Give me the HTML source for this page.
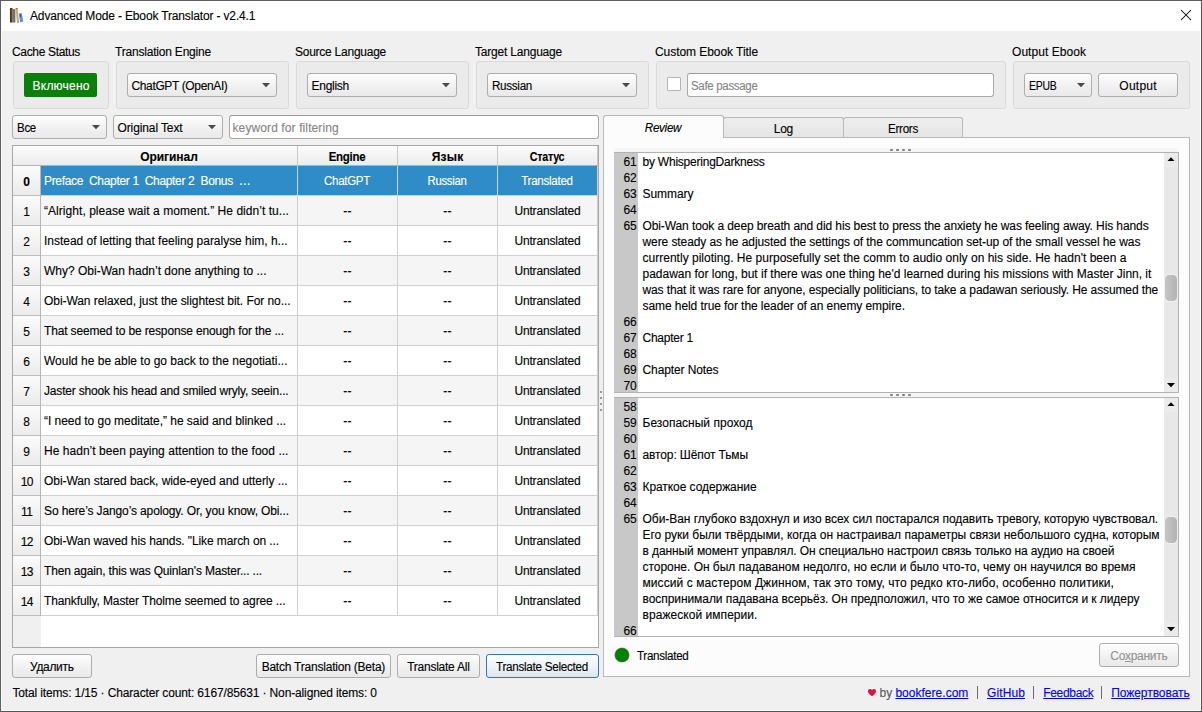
<!DOCTYPE html>
<html><head><meta charset="utf-8"><title>Advanced Mode - Ebook Translator</title>
<style>
html,body{margin:0;padding:0;background:#f0f0f0}
body{width:1202px;height:712px;position:relative;overflow:hidden;font-family:"Liberation Sans", sans-serif;font-size:12px}
div,svg,span.t{position:absolute}
span.t{-webkit-text-stroke:0.12px;white-space:pre;line-height:16px;height:16px}
u{text-decoration:underline}
</style></head>
<body>
<div style="left:0px;top:0px;width:1202px;height:712px;background:#f0f0f0"></div>
<div style="left:1px;top:1px;width:1199px;height:30px;background:#fff"></div>
<svg style="left:8.2px;top:6.8px" width="17.5" height="17" viewBox="0 0 16 16">
<rect x="1.6" y="1" width="2.5" height="13.6" rx="0.6" fill="#5a2a0c"/>
<rect x="2.5" y="2.6" width="0.7" height="10.5" fill="#8a531f"/>
<rect x="4.1" y="2" width="2.6" height="12.6" fill="#5f7a80"/>
<path d="M6.9 1.2 L8.7 0.9 L10.2 14.4 L8.2 14.7 Z" fill="#d9a944"/>
<path d="M6.9 1.2 L8.7 0.9 L8.8 1.8 L7 2.1 Z" fill="#9c5a5a"/>
<path d="M8.2 14.7 L10.2 14.4 L10.15 13.7 L8.1 14 Z" fill="#9c5a5a"/>
<path d="M9.9 6.2 L12.6 5.6 L14.1 13.6 L11.2 14.5 Z" fill="#5b8cff"/>
<path d="M11 7 L11.8 6.8 L12.2 9.6 L11.4 9.8 Z" fill="#2a34d8"/>
</svg>
<svg style="left:1180px;top:9px" width="12" height="12" viewBox="0 0 12 12"><path d="M1 1 L11 11 M11 1 L1 11" stroke="#000" stroke-width="1.05" fill="none"/></svg>
<div style="left:13px;top:61px;width:96px;height:48px;background:#ebebeb;border:1px solid #dadada;border-radius:3px;box-sizing:border-box"></div>
<div style="left:116px;top:61px;width:173px;height:48px;background:#ebebeb;border:1px solid #dadada;border-radius:3px;box-sizing:border-box"></div>
<div style="left:296px;top:61px;width:173px;height:48px;background:#ebebeb;border:1px solid #dadada;border-radius:3px;box-sizing:border-box"></div>
<div style="left:476px;top:61px;width:173px;height:48px;background:#ebebeb;border:1px solid #dadada;border-radius:3px;box-sizing:border-box"></div>
<div style="left:656px;top:61px;width:350px;height:48px;background:#ebebeb;border:1px solid #dadada;border-radius:3px;box-sizing:border-box"></div>
<div style="left:1013px;top:61px;width:177px;height:48px;background:#ebebeb;border:1px solid #dadada;border-radius:3px;box-sizing:border-box"></div>
<div style="left:24px;top:73px;width:73px;height:24px;background:#0a800a;border-radius:2px"></div>
<div style="left:127px;top:73px;width:150px;height:24px;background:linear-gradient(#fefefe,#f0f0f0 60%,#e9e9e9);border:1px solid #adadad;border-radius:3px;box-sizing:border-box"><svg style="right:6.3px;top:9.3px" width="8" height="4.5" viewBox="0 0 8 4.5"><path d="M0 0 L8 0 L4 4.3 Z" fill="#4a4a4a"/></svg></div>
<div style="left:307px;top:73px;width:150px;height:24px;background:linear-gradient(#fefefe,#f0f0f0 60%,#e9e9e9);border:1px solid #adadad;border-radius:3px;box-sizing:border-box"><svg style="right:6.3px;top:9.3px" width="8" height="4.5" viewBox="0 0 8 4.5"><path d="M0 0 L8 0 L4 4.3 Z" fill="#4a4a4a"/></svg></div>
<div style="left:487px;top:73px;width:150px;height:24px;background:linear-gradient(#fefefe,#f0f0f0 60%,#e9e9e9);border:1px solid #adadad;border-radius:3px;box-sizing:border-box"><svg style="right:6.3px;top:9.3px" width="8" height="4.5" viewBox="0 0 8 4.5"><path d="M0 0 L8 0 L4 4.3 Z" fill="#4a4a4a"/></svg></div>
<div style="left:667px;top:77px;width:14px;height:14px;background:#fff;border:1px solid #b4b4b4;box-sizing:border-box;border-radius:1px"></div>
<div style="left:687px;top:73px;width:307px;height:24px;background:#fff;border:1px solid #a9a9a9;border-top-color:#9a9a9a;border-radius:3px;box-sizing:border-box"></div>
<div style="left:1024px;top:73px;width:68px;height:24px;background:linear-gradient(#fefefe,#f0f0f0 60%,#e9e9e9);border:1px solid #adadad;border-radius:3px;box-sizing:border-box"><svg style="right:6.3px;top:9.3px" width="8" height="4.5" viewBox="0 0 8 4.5"><path d="M0 0 L8 0 L4 4.3 Z" fill="#4a4a4a"/></svg></div>
<div style="left:1098px;top:73px;width:80px;height:24px;background:linear-gradient(#fefefe,#f0f0f0 60%,#e9e9e9);border:1px solid #adadad;border-radius:3px;box-sizing:border-box;"></div>
<div style="left:12px;top:115px;width:95px;height:24px;background:linear-gradient(#fefefe,#f0f0f0 60%,#e9e9e9);border:1px solid #adadad;border-radius:3px;box-sizing:border-box"><svg style="right:6.3px;top:9.3px" width="8" height="4.5" viewBox="0 0 8 4.5"><path d="M0 0 L8 0 L4 4.3 Z" fill="#4a4a4a"/></svg></div>
<div style="left:113px;top:115px;width:110px;height:24px;background:linear-gradient(#fefefe,#f0f0f0 60%,#e9e9e9);border:1px solid #adadad;border-radius:3px;box-sizing:border-box"><svg style="right:6.3px;top:9.3px" width="8" height="4.5" viewBox="0 0 8 4.5"><path d="M0 0 L8 0 L4 4.3 Z" fill="#4a4a4a"/></svg></div>
<div style="left:229px;top:115px;width:370px;height:24px;background:#fff;border:1px solid #a9a9a9;border-top-color:#9a9a9a;border-radius:3px;box-sizing:border-box"></div>
<div style="left:12px;top:145px;width:587px;height:503px;background:#fff;border:1px solid #a6a6a6;box-sizing:border-box"></div>
<div style="left:13px;top:146px;width:585px;height:19px;background:linear-gradient(#fcfcfc,#ececec);"></div>
<div style="left:13px;top:165px;width:585px;height:1px;background:#b2b2b2"></div>
<div style="left:297px;top:146px;width:1px;height:19px;background:#c9c9c9"></div>
<div style="left:397px;top:146px;width:1px;height:19px;background:#c9c9c9"></div>
<div style="left:497px;top:146px;width:1px;height:19px;background:#c9c9c9"></div>
<div style="left:597px;top:146px;width:1px;height:19px;background:#c9c9c9"></div>
<div style="left:13px;top:166px;width:27px;height:29px;background:linear-gradient(#fbfbfb,#ebebeb)"></div>
<div style="left:40px;top:166px;width:1px;height:30px;background:#b6b6b6"></div>
<div style="left:13px;top:195px;width:27px;height:1px;background:#bdbdbd"></div>
<div style="left:41px;top:166px;width:557px;height:29px;background:#308cc6"></div>
<div style="left:41px;top:195px;width:557px;height:1px;background:#d0d0d0"></div>
<div style="left:297px;top:166px;width:1px;height:30px;background:#d0d0d0"></div>
<div style="left:397px;top:166px;width:1px;height:30px;background:#d0d0d0"></div>
<div style="left:497px;top:166px;width:1px;height:30px;background:#d0d0d0"></div>
<div style="left:597px;top:166px;width:1px;height:30px;background:#d0d0d0"></div>
<div style="left:13px;top:196px;width:27px;height:29px;background:linear-gradient(#fbfbfb,#ebebeb)"></div>
<div style="left:40px;top:196px;width:1px;height:30px;background:#b6b6b6"></div>
<div style="left:13px;top:225px;width:27px;height:1px;background:#bdbdbd"></div>
<div style="left:41px;top:196px;width:557px;height:29px;background:#f5f5f5"></div>
<div style="left:41px;top:225px;width:557px;height:1px;background:#d0d0d0"></div>
<div style="left:297px;top:196px;width:1px;height:30px;background:#d0d0d0"></div>
<div style="left:397px;top:196px;width:1px;height:30px;background:#d0d0d0"></div>
<div style="left:497px;top:196px;width:1px;height:30px;background:#d0d0d0"></div>
<div style="left:597px;top:196px;width:1px;height:30px;background:#d0d0d0"></div>
<div style="left:13px;top:226px;width:27px;height:29px;background:linear-gradient(#fbfbfb,#ebebeb)"></div>
<div style="left:40px;top:226px;width:1px;height:30px;background:#b6b6b6"></div>
<div style="left:13px;top:255px;width:27px;height:1px;background:#bdbdbd"></div>
<div style="left:41px;top:226px;width:557px;height:29px;background:#fff"></div>
<div style="left:41px;top:255px;width:557px;height:1px;background:#d0d0d0"></div>
<div style="left:297px;top:226px;width:1px;height:30px;background:#d0d0d0"></div>
<div style="left:397px;top:226px;width:1px;height:30px;background:#d0d0d0"></div>
<div style="left:497px;top:226px;width:1px;height:30px;background:#d0d0d0"></div>
<div style="left:597px;top:226px;width:1px;height:30px;background:#d0d0d0"></div>
<div style="left:13px;top:256px;width:27px;height:29px;background:linear-gradient(#fbfbfb,#ebebeb)"></div>
<div style="left:40px;top:256px;width:1px;height:30px;background:#b6b6b6"></div>
<div style="left:13px;top:285px;width:27px;height:1px;background:#bdbdbd"></div>
<div style="left:41px;top:256px;width:557px;height:29px;background:#f5f5f5"></div>
<div style="left:41px;top:285px;width:557px;height:1px;background:#d0d0d0"></div>
<div style="left:297px;top:256px;width:1px;height:30px;background:#d0d0d0"></div>
<div style="left:397px;top:256px;width:1px;height:30px;background:#d0d0d0"></div>
<div style="left:497px;top:256px;width:1px;height:30px;background:#d0d0d0"></div>
<div style="left:597px;top:256px;width:1px;height:30px;background:#d0d0d0"></div>
<div style="left:13px;top:286px;width:27px;height:29px;background:linear-gradient(#fbfbfb,#ebebeb)"></div>
<div style="left:40px;top:286px;width:1px;height:30px;background:#b6b6b6"></div>
<div style="left:13px;top:315px;width:27px;height:1px;background:#bdbdbd"></div>
<div style="left:41px;top:286px;width:557px;height:29px;background:#fff"></div>
<div style="left:41px;top:315px;width:557px;height:1px;background:#d0d0d0"></div>
<div style="left:297px;top:286px;width:1px;height:30px;background:#d0d0d0"></div>
<div style="left:397px;top:286px;width:1px;height:30px;background:#d0d0d0"></div>
<div style="left:497px;top:286px;width:1px;height:30px;background:#d0d0d0"></div>
<div style="left:597px;top:286px;width:1px;height:30px;background:#d0d0d0"></div>
<div style="left:13px;top:316px;width:27px;height:29px;background:linear-gradient(#fbfbfb,#ebebeb)"></div>
<div style="left:40px;top:316px;width:1px;height:30px;background:#b6b6b6"></div>
<div style="left:13px;top:345px;width:27px;height:1px;background:#bdbdbd"></div>
<div style="left:41px;top:316px;width:557px;height:29px;background:#f5f5f5"></div>
<div style="left:41px;top:345px;width:557px;height:1px;background:#d0d0d0"></div>
<div style="left:297px;top:316px;width:1px;height:30px;background:#d0d0d0"></div>
<div style="left:397px;top:316px;width:1px;height:30px;background:#d0d0d0"></div>
<div style="left:497px;top:316px;width:1px;height:30px;background:#d0d0d0"></div>
<div style="left:597px;top:316px;width:1px;height:30px;background:#d0d0d0"></div>
<div style="left:13px;top:346px;width:27px;height:29px;background:linear-gradient(#fbfbfb,#ebebeb)"></div>
<div style="left:40px;top:346px;width:1px;height:30px;background:#b6b6b6"></div>
<div style="left:13px;top:375px;width:27px;height:1px;background:#bdbdbd"></div>
<div style="left:41px;top:346px;width:557px;height:29px;background:#fff"></div>
<div style="left:41px;top:375px;width:557px;height:1px;background:#d0d0d0"></div>
<div style="left:297px;top:346px;width:1px;height:30px;background:#d0d0d0"></div>
<div style="left:397px;top:346px;width:1px;height:30px;background:#d0d0d0"></div>
<div style="left:497px;top:346px;width:1px;height:30px;background:#d0d0d0"></div>
<div style="left:597px;top:346px;width:1px;height:30px;background:#d0d0d0"></div>
<div style="left:13px;top:376px;width:27px;height:29px;background:linear-gradient(#fbfbfb,#ebebeb)"></div>
<div style="left:40px;top:376px;width:1px;height:30px;background:#b6b6b6"></div>
<div style="left:13px;top:405px;width:27px;height:1px;background:#bdbdbd"></div>
<div style="left:41px;top:376px;width:557px;height:29px;background:#f5f5f5"></div>
<div style="left:41px;top:405px;width:557px;height:1px;background:#d0d0d0"></div>
<div style="left:297px;top:376px;width:1px;height:30px;background:#d0d0d0"></div>
<div style="left:397px;top:376px;width:1px;height:30px;background:#d0d0d0"></div>
<div style="left:497px;top:376px;width:1px;height:30px;background:#d0d0d0"></div>
<div style="left:597px;top:376px;width:1px;height:30px;background:#d0d0d0"></div>
<div style="left:13px;top:406px;width:27px;height:29px;background:linear-gradient(#fbfbfb,#ebebeb)"></div>
<div style="left:40px;top:406px;width:1px;height:30px;background:#b6b6b6"></div>
<div style="left:13px;top:435px;width:27px;height:1px;background:#bdbdbd"></div>
<div style="left:41px;top:406px;width:557px;height:29px;background:#fff"></div>
<div style="left:41px;top:435px;width:557px;height:1px;background:#d0d0d0"></div>
<div style="left:297px;top:406px;width:1px;height:30px;background:#d0d0d0"></div>
<div style="left:397px;top:406px;width:1px;height:30px;background:#d0d0d0"></div>
<div style="left:497px;top:406px;width:1px;height:30px;background:#d0d0d0"></div>
<div style="left:597px;top:406px;width:1px;height:30px;background:#d0d0d0"></div>
<div style="left:13px;top:436px;width:27px;height:29px;background:linear-gradient(#fbfbfb,#ebebeb)"></div>
<div style="left:40px;top:436px;width:1px;height:30px;background:#b6b6b6"></div>
<div style="left:13px;top:465px;width:27px;height:1px;background:#bdbdbd"></div>
<div style="left:41px;top:436px;width:557px;height:29px;background:#f5f5f5"></div>
<div style="left:41px;top:465px;width:557px;height:1px;background:#d0d0d0"></div>
<div style="left:297px;top:436px;width:1px;height:30px;background:#d0d0d0"></div>
<div style="left:397px;top:436px;width:1px;height:30px;background:#d0d0d0"></div>
<div style="left:497px;top:436px;width:1px;height:30px;background:#d0d0d0"></div>
<div style="left:597px;top:436px;width:1px;height:30px;background:#d0d0d0"></div>
<div style="left:13px;top:466px;width:27px;height:29px;background:linear-gradient(#fbfbfb,#ebebeb)"></div>
<div style="left:40px;top:466px;width:1px;height:30px;background:#b6b6b6"></div>
<div style="left:13px;top:495px;width:27px;height:1px;background:#bdbdbd"></div>
<div style="left:41px;top:466px;width:557px;height:29px;background:#fff"></div>
<div style="left:41px;top:495px;width:557px;height:1px;background:#d0d0d0"></div>
<div style="left:297px;top:466px;width:1px;height:30px;background:#d0d0d0"></div>
<div style="left:397px;top:466px;width:1px;height:30px;background:#d0d0d0"></div>
<div style="left:497px;top:466px;width:1px;height:30px;background:#d0d0d0"></div>
<div style="left:597px;top:466px;width:1px;height:30px;background:#d0d0d0"></div>
<div style="left:13px;top:496px;width:27px;height:29px;background:linear-gradient(#fbfbfb,#ebebeb)"></div>
<div style="left:40px;top:496px;width:1px;height:30px;background:#b6b6b6"></div>
<div style="left:13px;top:525px;width:27px;height:1px;background:#bdbdbd"></div>
<div style="left:41px;top:496px;width:557px;height:29px;background:#f5f5f5"></div>
<div style="left:41px;top:525px;width:557px;height:1px;background:#d0d0d0"></div>
<div style="left:297px;top:496px;width:1px;height:30px;background:#d0d0d0"></div>
<div style="left:397px;top:496px;width:1px;height:30px;background:#d0d0d0"></div>
<div style="left:497px;top:496px;width:1px;height:30px;background:#d0d0d0"></div>
<div style="left:597px;top:496px;width:1px;height:30px;background:#d0d0d0"></div>
<div style="left:13px;top:526px;width:27px;height:29px;background:linear-gradient(#fbfbfb,#ebebeb)"></div>
<div style="left:40px;top:526px;width:1px;height:30px;background:#b6b6b6"></div>
<div style="left:13px;top:555px;width:27px;height:1px;background:#bdbdbd"></div>
<div style="left:41px;top:526px;width:557px;height:29px;background:#fff"></div>
<div style="left:41px;top:555px;width:557px;height:1px;background:#d0d0d0"></div>
<div style="left:297px;top:526px;width:1px;height:30px;background:#d0d0d0"></div>
<div style="left:397px;top:526px;width:1px;height:30px;background:#d0d0d0"></div>
<div style="left:497px;top:526px;width:1px;height:30px;background:#d0d0d0"></div>
<div style="left:597px;top:526px;width:1px;height:30px;background:#d0d0d0"></div>
<div style="left:13px;top:556px;width:27px;height:29px;background:linear-gradient(#fbfbfb,#ebebeb)"></div>
<div style="left:40px;top:556px;width:1px;height:30px;background:#b6b6b6"></div>
<div style="left:13px;top:585px;width:27px;height:1px;background:#bdbdbd"></div>
<div style="left:41px;top:556px;width:557px;height:29px;background:#f5f5f5"></div>
<div style="left:41px;top:585px;width:557px;height:1px;background:#d0d0d0"></div>
<div style="left:297px;top:556px;width:1px;height:30px;background:#d0d0d0"></div>
<div style="left:397px;top:556px;width:1px;height:30px;background:#d0d0d0"></div>
<div style="left:497px;top:556px;width:1px;height:30px;background:#d0d0d0"></div>
<div style="left:597px;top:556px;width:1px;height:30px;background:#d0d0d0"></div>
<div style="left:13px;top:586px;width:27px;height:29px;background:linear-gradient(#fbfbfb,#ebebeb)"></div>
<div style="left:40px;top:586px;width:1px;height:30px;background:#b6b6b6"></div>
<div style="left:13px;top:615px;width:27px;height:1px;background:#bdbdbd"></div>
<div style="left:41px;top:586px;width:557px;height:29px;background:#fff"></div>
<div style="left:41px;top:615px;width:557px;height:1px;background:#d0d0d0"></div>
<div style="left:297px;top:586px;width:1px;height:30px;background:#d0d0d0"></div>
<div style="left:397px;top:586px;width:1px;height:30px;background:#d0d0d0"></div>
<div style="left:497px;top:586px;width:1px;height:30px;background:#d0d0d0"></div>
<div style="left:597px;top:586px;width:1px;height:30px;background:#d0d0d0"></div>
<div style="left:13px;top:616px;width:28px;height:31px;background:#f0f0f0"></div>
<div style="left:12px;top:654px;width:80px;height:24px;background:linear-gradient(#fefefe,#f0f0f0 60%,#e9e9e9);border:1px solid #adadad;border-radius:3px;box-sizing:border-box;"></div>
<div style="left:256px;top:654px;width:135px;height:24px;background:linear-gradient(#fefefe,#f0f0f0 60%,#e9e9e9);border:1px solid #adadad;border-radius:3px;box-sizing:border-box;"></div>
<div style="left:397px;top:654px;width:83px;height:24px;background:linear-gradient(#fefefe,#f0f0f0 60%,#e9e9e9);border:1px solid #adadad;border-radius:3px;box-sizing:border-box;"></div>
<div style="left:486px;top:654px;width:113px;height:24px;background:linear-gradient(#fefefe,#f0f0f0 60%,#e9e9e9);border:1px solid #3577ad;border-radius:3px;box-sizing:border-box;background:linear-gradient(#fdfeff,#edf2f6 55%,#dde6ee)"></div>
<div style="left:600px;top:390.5px;width:2px;height:2.6px;background:#7c7c7c;border-radius:1px"></div>
<div style="left:600px;top:396.5px;width:2px;height:2.6px;background:#7c7c7c;border-radius:1px"></div>
<div style="left:600px;top:402.5px;width:2px;height:2.6px;background:#7c7c7c;border-radius:1px"></div>
<div style="left:600px;top:408.5px;width:2px;height:2.6px;background:#7c7c7c;border-radius:1px"></div>
<div style="left:603px;top:137px;width:587px;height:540px;background:#fcfcfc;border:1px solid #b9b9b9;box-sizing:border-box"></div>
<div style="left:723px;top:117px;width:121px;height:20px;background:linear-gradient(#eeeeee,#e5e5e5);border:1px solid #b9b9b9;border-bottom:none;box-sizing:border-box;border-radius:3px 3px 0 0"></div>
<div style="left:843px;top:117px;width:120px;height:20px;background:linear-gradient(#eeeeee,#e5e5e5);border:1px solid #b9b9b9;border-bottom:none;box-sizing:border-box;border-radius:3px 3px 0 0"></div>
<div style="left:603px;top:115px;width:121px;height:23px;background:#fcfcfc;border:1px solid #b9b9b9;border-bottom:none;box-sizing:border-box;border-radius:3px 3px 0 0"></div>
<div style="left:614px;top:148px;width:564px;height:4px;background:#f5f5f5"></div>
<div style="left:890px;top:149px;width:3px;height:2.4px;background:#7c7c7c;border-radius:1px"></div>
<div style="left:896px;top:149px;width:3px;height:2.4px;background:#7c7c7c;border-radius:1px"></div>
<div style="left:902px;top:149px;width:3px;height:2.4px;background:#7c7c7c;border-radius:1px"></div>
<div style="left:908px;top:149px;width:3px;height:2.4px;background:#7c7c7c;border-radius:1px"></div>
<div style="left:614px;top:393px;width:564px;height:4px;background:#f5f5f5"></div>
<div style="left:890px;top:394px;width:3px;height:2.4px;background:#7c7c7c;border-radius:1px"></div>
<div style="left:896px;top:394px;width:3px;height:2.4px;background:#7c7c7c;border-radius:1px"></div>
<div style="left:902px;top:394px;width:3px;height:2.4px;background:#7c7c7c;border-radius:1px"></div>
<div style="left:908px;top:394px;width:3px;height:2.4px;background:#7c7c7c;border-radius:1px"></div>
<div style="left:614px;top:152px;width:565px;height:241px;background:#fff;border:1px solid #b2b2b2;border-left:none;box-sizing:border-box"></div>
<div style="left:614px;top:153px;width:24px;height:239px;background:#c8c8c8"></div>
<div style="left:1164px;top:153px;width:14px;height:239px;background:#e8e8e8"></div>
<div style="left:1164px;top:153px;width:14px;height:14px;background:#ebebeb"></div>
<div style="left:1164px;top:378px;width:14px;height:14px;background:#ebebeb"></div>
<svg style="left:1167px;top:156.6px" width="8" height="4.5" viewBox="0 0 8 4.5"><path d="M0 4.5 L8 4.5 L4 0.3 Z" fill="#000"/></svg>
<svg style="left:1167px;top:383px" width="8" height="4.5" viewBox="0 0 8 4.5"><path d="M0 0 L8 0 L4 4.2 Z" fill="#000"/></svg>
<div style="left:1165px;top:275px;width:12px;height:26px;background:linear-gradient(90deg,#c6c6c6,#b2b2b2);border-radius:4.5px;box-shadow:0 0 0 1px #f0f0f0"></div>
<div style="left:614px;top:397px;width:565px;height:240px;background:#fff;border:1px solid #b2b2b2;border-left:none;box-sizing:border-box"></div>
<div style="left:614px;top:398px;width:24px;height:238px;background:#c8c8c8"></div>
<div style="left:1164px;top:398px;width:14px;height:238px;background:#e8e8e8"></div>
<div style="left:1164px;top:398px;width:14px;height:14px;background:#ebebeb"></div>
<div style="left:1164px;top:622px;width:14px;height:14px;background:#ebebeb"></div>
<svg style="left:1167px;top:401.6px" width="8" height="4.5" viewBox="0 0 8 4.5"><path d="M0 4.5 L8 4.5 L4 0.3 Z" fill="#000"/></svg>
<svg style="left:1167px;top:627px" width="8" height="4.5" viewBox="0 0 8 4.5"><path d="M0 0 L8 0 L4 4.2 Z" fill="#000"/></svg>
<div style="left:1165px;top:517px;width:12px;height:26px;background:linear-gradient(90deg,#c6c6c6,#b2b2b2);border-radius:4.5px;box-shadow:0 0 0 1px #f0f0f0"></div>

<div style="left:615px;top:648px;width:14px;height:14px;background:#008000;border-radius:50%;box-shadow:0 0 0 0.6px #9a9a9a"></div>
<div style="left:1099px;top:643px;width:80px;height:24px;background:linear-gradient(#fefefe,#f0f0f0 60%,#e9e9e9);border:1px solid #adadad;border-radius:3px;box-sizing:border-box"></div>
<svg style="left:868px;top:688.7px" width="8" height="7.4" viewBox="0 0 16 14.8"><path d="M8 14.8 C3 10.5 0 7.6 0 4.3 C0 1.7 1.9 0 4.1 0 C5.7 0 7.2 0.9 8 2.4 C8.8 0.9 10.3 0 11.9 0 C14.1 0 16 1.7 16 4.3 C16 7.6 13 10.5 8 14.8 Z" fill="#dc143c"/></svg>
<div style="left:977px;top:686px;width:1px;height:13px;background:#6e6e6e"></div>
<div style="left:1033px;top:686px;width:1px;height:13px;background:#6e6e6e"></div>
<div style="left:1101px;top:686px;width:1px;height:13px;background:#6e6e6e"></div>
<div style="left:0px;top:0px;width:1202px;height:1px;background:#5e5e5e"></div>
<div style="left:0px;top:0px;width:1px;height:712px;background:#5e5e5e"></div>
<div style="left:1px;top:31px;width:1px;height:680px;background:#fafafa"></div>
<div style="left:1200px;top:1px;width:1px;height:710px;background:#fafafa"></div>
<div style="left:1201px;top:0px;width:1px;height:712px;background:#555"></div>
<div style="left:1px;top:710px;width:1200px;height:1px;background:#fafafa"></div>
<div style="left:0px;top:711px;width:1202px;height:1px;background:#555"></div>
<span class="t" style="top:8.00px;color:#000;letter-spacing:-0.150px;left:30.00px;">Advanced Mode - Ebook Translator - v2.4.1</span>
<span class="t" style="top:44.00px;color:#000;letter-spacing:-0.337px;left:12.00px;">Cache Status</span>
<span class="t" style="top:44.00px;color:#000;letter-spacing:-0.201px;left:115.00px;">Translation Engine</span>
<span class="t" style="top:44.00px;color:#000;letter-spacing:-0.250px;left:295.00px;">Source Language</span>
<span class="t" style="top:44.00px;color:#000;letter-spacing:-0.205px;left:475.00px;">Target Language</span>
<span class="t" style="top:44.00px;color:#000;letter-spacing:-0.058px;left:655.00px;">Custom Ebook Title</span>
<span class="t" style="top:44.00px;color:#000;letter-spacing:0.051px;left:1012.00px;">Output Ebook</span>
<span class="t" style="top:77.60px;color:#fff;letter-spacing:0.205px;left:61.10px;transform:translateX(-50%) ;">Включено</span>
<span class="t" style="top:77.60px;color:#000;letter-spacing:-0.364px;left:131.50px;">ChatGPT (OpenAI)</span>
<span class="t" style="top:77.60px;color:#000;letter-spacing:-0.266px;left:311.50px;">English</span>
<span class="t" style="top:77.60px;color:#000;letter-spacing:-0.300px;left:491.50px;transform-origin:0 50%;transform:scaleX(0.9695);">Russian</span>
<span class="t" style="top:77.60px;color:#858585;letter-spacing:-0.300px;left:690.50px;transform-origin:0 50%;transform:scaleX(0.9529);">Safe passage</span>
<span class="t" style="top:77.60px;color:#000;letter-spacing:-0.300px;left:1028.50px;transform-origin:0 50%;transform:scaleX(0.8734);">EPUB</span>
<span class="t" style="top:77.60px;color:#000;letter-spacing:0.245px;left:1138.12px;transform:translateX(-50%) ;">Output</span>
<span class="t" style="top:119.60px;color:#000;letter-spacing:-0.300px;left:16.50px;transform-origin:0 50%;transform:scaleX(0.9602);">Все</span>
<span class="t" style="top:119.60px;color:#000;letter-spacing:-0.114px;left:117.50px;">Original Text</span>
<span class="t" style="top:119.60px;color:#858585;letter-spacing:0.107px;left:232.50px;">keyword for filtering</span>
<span class="t" style="top:149.00px;color:#000;font-weight:bold;letter-spacing:-0.059px;left:168.97px;transform:translateX(-50%) ;">Оригинал</span>
<span class="t" style="top:149.00px;color:#000;font-weight:bold;letter-spacing:-0.300px;left:347.36px;transform:translateX(-50%) scaleX(0.9551);">Engine</span>
<span class="t" style="top:149.00px;color:#000;font-weight:bold;letter-spacing:0.164px;left:447.58px;transform:translateX(-50%) ;">Язык</span>
<span class="t" style="top:149.00px;color:#000;font-weight:bold;letter-spacing:-0.300px;left:547.37px;transform:translateX(-50%) scaleX(0.8926);">Статус</span>
<span class="t" style="top:174.00px;color:#000;font-weight:bold;left:26.70px;transform:translateX(-50%) ;">0</span>
<span class="t" style="top:173.00px;color:#fff;letter-spacing:-0.332px;left:44.00px;">Preface  Chapter 1  Chapter 2  Bonus  …</span>
<span class="t" style="top:173.00px;color:#fff;letter-spacing:-0.300px;left:347.36px;transform:translateX(-50%) scaleX(0.9600);">ChatGPT</span>
<span class="t" style="top:173.00px;color:#fff;letter-spacing:-0.300px;left:447.36px;transform:translateX(-50%) scaleX(0.9452);">Russian</span>
<span class="t" style="top:173.00px;color:#fff;letter-spacing:-0.300px;left:547.35px;transform:translateX(-50%) scaleX(0.9671);">Translated</span>
<span class="t" style="top:204.00px;color:#000;left:26.70px;transform:translateX(-50%) ;">1</span>
<span class="t" style="top:203.00px;color:#000;letter-spacing:0.046px;left:44.00px;">“Alright, please wait a moment.” He didn’t tu...</span>
<span class="t" style="top:203.00px;color:#000;letter-spacing:0.250px;left:347.62px;transform:translateX(-50%) ;">--</span>
<span class="t" style="top:203.00px;color:#000;letter-spacing:0.250px;left:447.62px;transform:translateX(-50%) ;">--</span>
<span class="t" style="top:203.00px;color:#000;letter-spacing:-0.171px;left:547.41px;transform:translateX(-50%) ;">Untranslated</span>
<span class="t" style="top:234.00px;color:#000;left:26.70px;transform:translateX(-50%) ;">2</span>
<span class="t" style="top:233.00px;color:#000;letter-spacing:-0.026px;left:44.00px;">Instead of letting that feeling paralyse him, h...</span>
<span class="t" style="top:233.00px;color:#000;letter-spacing:0.250px;left:347.62px;transform:translateX(-50%) ;">--</span>
<span class="t" style="top:233.00px;color:#000;letter-spacing:0.250px;left:447.62px;transform:translateX(-50%) ;">--</span>
<span class="t" style="top:233.00px;color:#000;letter-spacing:-0.171px;left:547.41px;transform:translateX(-50%) ;">Untranslated</span>
<span class="t" style="top:264.00px;color:#000;left:26.70px;transform:translateX(-50%) ;">3</span>
<span class="t" style="top:263.00px;color:#000;letter-spacing:0.004px;left:44.00px;">Why? Obi-Wan hadn’t done anything to ...</span>
<span class="t" style="top:263.00px;color:#000;letter-spacing:0.250px;left:347.62px;transform:translateX(-50%) ;">--</span>
<span class="t" style="top:263.00px;color:#000;letter-spacing:0.250px;left:447.62px;transform:translateX(-50%) ;">--</span>
<span class="t" style="top:263.00px;color:#000;letter-spacing:-0.171px;left:547.41px;transform:translateX(-50%) ;">Untranslated</span>
<span class="t" style="top:294.00px;color:#000;left:26.70px;transform:translateX(-50%) ;">4</span>
<span class="t" style="top:293.00px;color:#000;letter-spacing:-0.063px;left:44.00px;">Obi-Wan relaxed, just the slightest bit. For no...</span>
<span class="t" style="top:293.00px;color:#000;letter-spacing:0.250px;left:347.62px;transform:translateX(-50%) ;">--</span>
<span class="t" style="top:293.00px;color:#000;letter-spacing:0.250px;left:447.62px;transform:translateX(-50%) ;">--</span>
<span class="t" style="top:293.00px;color:#000;letter-spacing:-0.171px;left:547.41px;transform:translateX(-50%) ;">Untranslated</span>
<span class="t" style="top:324.00px;color:#000;left:26.70px;transform:translateX(-50%) ;">5</span>
<span class="t" style="top:323.00px;color:#000;letter-spacing:-0.152px;left:44.00px;">That seemed to be response enough for the ...</span>
<span class="t" style="top:323.00px;color:#000;letter-spacing:0.250px;left:347.62px;transform:translateX(-50%) ;">--</span>
<span class="t" style="top:323.00px;color:#000;letter-spacing:0.250px;left:447.62px;transform:translateX(-50%) ;">--</span>
<span class="t" style="top:323.00px;color:#000;letter-spacing:-0.171px;left:547.41px;transform:translateX(-50%) ;">Untranslated</span>
<span class="t" style="top:354.00px;color:#000;left:26.70px;transform:translateX(-50%) ;">6</span>
<span class="t" style="top:353.00px;color:#000;letter-spacing:-0.010px;left:44.00px;">Would he be able to go back to the negotiati...</span>
<span class="t" style="top:353.00px;color:#000;letter-spacing:0.250px;left:347.62px;transform:translateX(-50%) ;">--</span>
<span class="t" style="top:353.00px;color:#000;letter-spacing:0.250px;left:447.62px;transform:translateX(-50%) ;">--</span>
<span class="t" style="top:353.00px;color:#000;letter-spacing:-0.171px;left:547.41px;transform:translateX(-50%) ;">Untranslated</span>
<span class="t" style="top:384.00px;color:#000;left:26.70px;transform:translateX(-50%) ;">7</span>
<span class="t" style="top:383.00px;color:#000;letter-spacing:-0.182px;left:44.00px;">Jaster shook his head and smiled wryly, seein...</span>
<span class="t" style="top:383.00px;color:#000;letter-spacing:0.250px;left:347.62px;transform:translateX(-50%) ;">--</span>
<span class="t" style="top:383.00px;color:#000;letter-spacing:0.250px;left:447.62px;transform:translateX(-50%) ;">--</span>
<span class="t" style="top:383.00px;color:#000;letter-spacing:-0.171px;left:547.41px;transform:translateX(-50%) ;">Untranslated</span>
<span class="t" style="top:414.00px;color:#000;left:26.70px;transform:translateX(-50%) ;">8</span>
<span class="t" style="top:413.00px;color:#000;letter-spacing:-0.045px;left:44.00px;">“I need to go meditate,” he said and blinked ...</span>
<span class="t" style="top:413.00px;color:#000;letter-spacing:0.250px;left:347.62px;transform:translateX(-50%) ;">--</span>
<span class="t" style="top:413.00px;color:#000;letter-spacing:0.250px;left:447.62px;transform:translateX(-50%) ;">--</span>
<span class="t" style="top:413.00px;color:#000;letter-spacing:-0.171px;left:547.41px;transform:translateX(-50%) ;">Untranslated</span>
<span class="t" style="top:444.00px;color:#000;left:26.70px;transform:translateX(-50%) ;">9</span>
<span class="t" style="top:443.00px;color:#000;letter-spacing:0.035px;left:44.00px;">He hadn’t been paying attention to the food ...</span>
<span class="t" style="top:443.00px;color:#000;letter-spacing:0.250px;left:347.62px;transform:translateX(-50%) ;">--</span>
<span class="t" style="top:443.00px;color:#000;letter-spacing:0.250px;left:447.62px;transform:translateX(-50%) ;">--</span>
<span class="t" style="top:443.00px;color:#000;letter-spacing:-0.171px;left:547.41px;transform:translateX(-50%) ;">Untranslated</span>
<span class="t" style="top:474.00px;color:#000;letter-spacing:-0.700px;left:26.65px;transform:translateX(-50%) ;">10</span>
<span class="t" style="top:473.00px;color:#000;letter-spacing:-0.062px;left:44.00px;">Obi-Wan stared back, wide-eyed and utterly ...</span>
<span class="t" style="top:473.00px;color:#000;letter-spacing:0.250px;left:347.62px;transform:translateX(-50%) ;">--</span>
<span class="t" style="top:473.00px;color:#000;letter-spacing:0.250px;left:447.62px;transform:translateX(-50%) ;">--</span>
<span class="t" style="top:473.00px;color:#000;letter-spacing:-0.171px;left:547.41px;transform:translateX(-50%) ;">Untranslated</span>
<span class="t" style="top:504.00px;color:#000;letter-spacing:-0.700px;left:26.65px;transform:translateX(-50%) ;">11</span>
<span class="t" style="top:503.00px;color:#000;letter-spacing:-0.124px;left:44.00px;">So here’s Jango’s apology. Or, you know, Obi...</span>
<span class="t" style="top:503.00px;color:#000;letter-spacing:0.250px;left:347.62px;transform:translateX(-50%) ;">--</span>
<span class="t" style="top:503.00px;color:#000;letter-spacing:0.250px;left:447.62px;transform:translateX(-50%) ;">--</span>
<span class="t" style="top:503.00px;color:#000;letter-spacing:-0.171px;left:547.41px;transform:translateX(-50%) ;">Untranslated</span>
<span class="t" style="top:534.00px;color:#000;letter-spacing:-0.700px;left:26.65px;transform:translateX(-50%) ;">12</span>
<span class="t" style="top:533.00px;color:#000;letter-spacing:-0.099px;left:44.00px;">Obi-Wan waved his hands. "Like march on ...</span>
<span class="t" style="top:533.00px;color:#000;letter-spacing:0.250px;left:347.62px;transform:translateX(-50%) ;">--</span>
<span class="t" style="top:533.00px;color:#000;letter-spacing:0.250px;left:447.62px;transform:translateX(-50%) ;">--</span>
<span class="t" style="top:533.00px;color:#000;letter-spacing:-0.171px;left:547.41px;transform:translateX(-50%) ;">Untranslated</span>
<span class="t" style="top:564.00px;color:#000;letter-spacing:-0.700px;left:26.65px;transform:translateX(-50%) ;">13</span>
<span class="t" style="top:563.00px;color:#000;letter-spacing:-0.176px;left:44.00px;">Then again, this was Quinlan's Master... ...</span>
<span class="t" style="top:563.00px;color:#000;letter-spacing:0.250px;left:347.62px;transform:translateX(-50%) ;">--</span>
<span class="t" style="top:563.00px;color:#000;letter-spacing:0.250px;left:447.62px;transform:translateX(-50%) ;">--</span>
<span class="t" style="top:563.00px;color:#000;letter-spacing:-0.171px;left:547.41px;transform:translateX(-50%) ;">Untranslated</span>
<span class="t" style="top:594.00px;color:#000;letter-spacing:-0.700px;left:26.65px;transform:translateX(-50%) ;">14</span>
<span class="t" style="top:593.00px;color:#000;letter-spacing:-0.123px;left:44.00px;">Thankfully, Master Tholme seemed to agree ...</span>
<span class="t" style="top:593.00px;color:#000;letter-spacing:0.250px;left:347.62px;transform:translateX(-50%) ;">--</span>
<span class="t" style="top:593.00px;color:#000;letter-spacing:0.250px;left:447.62px;transform:translateX(-50%) ;">--</span>
<span class="t" style="top:593.00px;color:#000;letter-spacing:-0.171px;left:547.41px;transform:translateX(-50%) ;">Untranslated</span>
<span class="t" style="top:658.60px;color:#000;letter-spacing:-0.333px;left:51.83px;transform:translateX(-50%) ;">Удалить</span>
<span class="t" style="top:658.60px;color:#000;letter-spacing:-0.218px;left:323.39px;transform:translateX(-50%) ;">Batch Translation (Beta)</span>
<span class="t" style="top:658.60px;color:#000;letter-spacing:-0.238px;left:438.38px;transform:translateX(-50%) ;">Translate All</span>
<span class="t" style="top:658.60px;color:#000;letter-spacing:-0.300px;left:542.35px;transform:translateX(-50%) scaleX(0.9765);">Translate Selected</span>
<span class="t" style="top:685.00px;color:#000;letter-spacing:-0.139px;left:12.40px;">Total items: 1/15 · Character count: 6167/85631 · Non-aligned items: 0</span>
<span class="t" style="top:120.40px;color:#000;font-style:italic;letter-spacing:-0.300px;left:662.85px;transform:translateX(-50%) scaleX(0.9718);">Review</span>
<span class="t" style="top:121.40px;color:#000;letter-spacing:-0.344px;left:783.33px;transform:translateX(-50%) ;">Log</span>
<span class="t" style="top:121.40px;color:#000;letter-spacing:-0.300px;left:903.35px;transform:translateX(-50%) scaleX(0.9718);">Errors</span>
<span class="t" style="top:153.60px;color:#000;letter-spacing:-0.250px;right:565.65px;">61</span>
<span class="t" style="top:153.60px;color:#000;letter-spacing:-0.225px;left:642.50px;">by WhisperingDarkness</span>
<span class="t" style="top:169.60px;color:#000;letter-spacing:-0.250px;right:565.65px;">62</span>
<span class="t" style="top:185.60px;color:#000;letter-spacing:-0.250px;right:565.65px;">63</span>
<span class="t" style="top:185.60px;color:#000;letter-spacing:-0.049px;left:642.50px;">Summary</span>
<span class="t" style="top:201.60px;color:#000;letter-spacing:-0.250px;right:565.65px;">64</span>
<span class="t" style="top:217.60px;color:#000;letter-spacing:-0.250px;right:565.65px;">65</span>
<span class="t" style="top:217.60px;color:#000;letter-spacing:-0.101px;left:642.50px;">Obi-Wan took a deep breath and did his best to press the anxiety he was feeling away. His hands</span>
<span class="t" style="top:233.60px;color:#000;letter-spacing:-0.084px;left:642.50px;">were steady as he adjusted the settings of the communcation set-up of the small vessel he was</span>
<span class="t" style="top:249.60px;color:#000;letter-spacing:0.015px;left:642.50px;">currently piloting. He purposefully set the comm to audio only on his side. He hadn't been a</span>
<span class="t" style="top:265.60px;color:#000;letter-spacing:-0.011px;left:642.50px;">padawan for long, but if there was one thing he'd learned during his missions with Master Jinn, it</span>
<span class="t" style="top:281.60px;color:#000;letter-spacing:-0.119px;left:642.50px;">was that it was rare for anyone, especially politicians, to take a padawan seriously. He assumed the</span>
<span class="t" style="top:297.60px;color:#000;letter-spacing:-0.075px;left:642.50px;">same held true for the leader of an enemy empire.</span>
<span class="t" style="top:313.60px;color:#000;letter-spacing:-0.250px;right:565.65px;">66</span>
<span class="t" style="top:329.60px;color:#000;letter-spacing:-0.250px;right:565.65px;">67</span>
<span class="t" style="top:329.60px;color:#000;letter-spacing:-0.245px;left:642.50px;">Chapter 1</span>
<span class="t" style="top:345.60px;color:#000;letter-spacing:-0.250px;right:565.65px;">68</span>
<span class="t" style="top:361.60px;color:#000;letter-spacing:-0.250px;right:565.65px;">69</span>
<span class="t" style="top:361.60px;color:#000;letter-spacing:-0.106px;left:642.50px;">Chapter Notes</span>
<span class="t" style="top:377.60px;color:#000;letter-spacing:-0.250px;right:565.65px;">70</span>
<span class="t" style="top:399.00px;color:#000;letter-spacing:-0.250px;right:565.65px;">58</span>
<span class="t" style="top:415.00px;color:#000;letter-spacing:-0.250px;right:565.65px;">59</span>
<span class="t" style="top:415.00px;color:#000;letter-spacing:0.013px;left:642.50px;">Безопасный проход</span>
<span class="t" style="top:431.00px;color:#000;letter-spacing:-0.250px;right:565.65px;">60</span>
<span class="t" style="top:447.00px;color:#000;letter-spacing:-0.250px;right:565.65px;">61</span>
<span class="t" style="top:447.00px;color:#000;letter-spacing:-0.119px;left:642.50px;">автор: Шёпот Тьмы</span>
<span class="t" style="top:463.00px;color:#000;letter-spacing:-0.250px;right:565.65px;">62</span>
<span class="t" style="top:479.00px;color:#000;letter-spacing:-0.250px;right:565.65px;">63</span>
<span class="t" style="top:479.00px;color:#000;letter-spacing:-0.069px;left:642.50px;">Краткое содержание</span>
<span class="t" style="top:495.00px;color:#000;letter-spacing:-0.250px;right:565.65px;">64</span>
<span class="t" style="top:511.00px;color:#000;letter-spacing:-0.250px;right:565.65px;">65</span>
<span class="t" style="top:511.00px;color:#000;letter-spacing:-0.040px;left:642.50px;">Оби-Ван глубоко вздохнул и изо всех сил постарался подавить тревогу, которую чувствовал.</span>
<span class="t" style="top:527.00px;color:#000;letter-spacing:-0.009px;left:642.50px;">Его руки были твёрдыми, когда он настраивал параметры связи небольшого судна, которым</span>
<span class="t" style="top:543.00px;color:#000;letter-spacing:-0.093px;left:642.50px;">в данный момент управлял. Он специально настроил связь только на аудио на своей</span>
<span class="t" style="top:559.00px;color:#000;letter-spacing:-0.025px;left:642.50px;">стороне. Он был падаваном недолго, но если и было что-то, чему он научился во время</span>
<span class="t" style="top:575.00px;color:#000;letter-spacing:0.082px;left:642.50px;">миссий с мастером Джинном, так это тому, что редко кто-либо, особенно политики,</span>
<span class="t" style="top:591.00px;color:#000;letter-spacing:-0.066px;left:642.50px;">воспринимали падавана всерьёз. Он предположил, что то же самое относится и к лидеру</span>
<span class="t" style="top:607.00px;color:#000;letter-spacing:0.052px;left:642.50px;">вражеской империи.</span>
<span class="t" style="top:623.00px;color:#000;letter-spacing:-0.250px;right:565.65px;">66</span>
<span class="t" style="top:648.00px;color:#000;letter-spacing:-0.300px;left:637.00px;transform-origin:0 50%;transform:scaleX(0.9671);">Translated</span>
<span class="t" style="top:647.60px;color:#949494;letter-spacing:-0.295px;left:1138.85px;transform:translateX(-50%) ;">Со<u>х</u>ранить</span>
<span class="t" style="top:685.00px;color:#5c5c5c;letter-spacing:-0.094px;left:879.60px;">by</span>
<span class="t" style="top:684.70px;color:#0000ff;letter-spacing:0.025px;left:895.40px;text-decoration:underline;">bookfere.com</span>
<span class="t" style="top:684.70px;color:#0000ff;letter-spacing:0.107px;left:987.00px;text-decoration:underline;">GitHub</span>
<span class="t" style="top:684.70px;color:#0000ff;letter-spacing:-0.338px;left:1043.30px;text-decoration:underline;">Feedback</span>
<span class="t" style="top:684.70px;color:#0000ff;letter-spacing:-0.049px;left:1111.20px;text-decoration:underline;">Пожертвовать</span>
<div style="left:614px;top:636px;width:40px;height:6px;background:#fcfcfc;border-top:1px solid #b2b2b2;box-sizing:border-box"></div>
</body></html>
